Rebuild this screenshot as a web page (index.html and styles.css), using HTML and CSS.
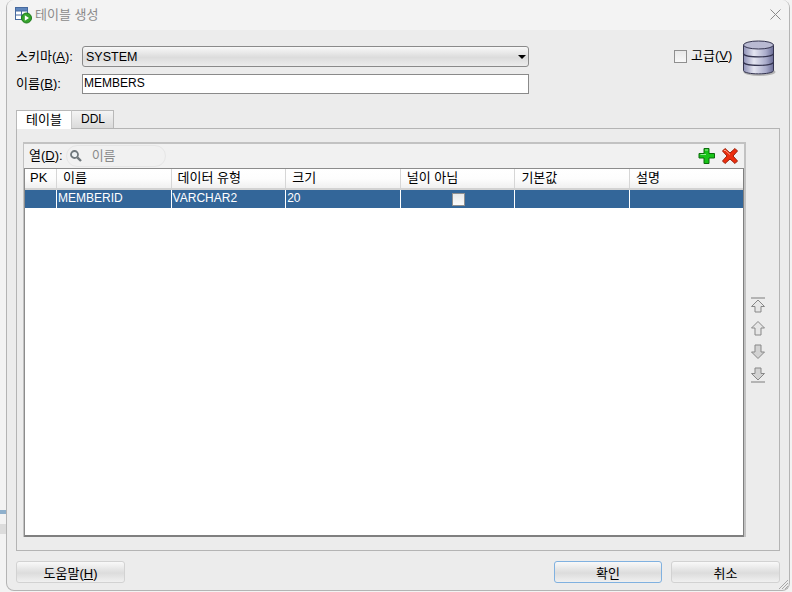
FILE: index.html
```html
<!DOCTYPE html>
<html lang="ko">
<head>
<meta charset="utf-8">
<title>테이블 생성</title>
<link rel="stylesheet" href="styles.css">
</head>
<body>
<div class="backdrop"><i class="mark-blue"></i><i class="mark-grey"></i></div>
<main class="window">
  <header class="titlebar">
    <svg class="title-icon" width="18" height="18" viewBox="0 0 18 18">
      <rect x="0.5" y="1.5" width="12" height="12" fill="#fff" stroke="#46699e"/>
      <rect x="0.5" y="1.5" width="12" height="3.5" fill="#5f86bd" stroke="#46699e"/>
      <path d="M0.5 9H12.5M6.5 5V13.5" stroke="#46699e" fill="none"/>
      <circle cx="11.5" cy="12" r="5" fill="#35a32c" stroke="#1d7a1b"/>
      <path d="M9.8 9.3L14 12L9.8 14.7Z" fill="#fff"/>
    </svg>
    <span class="title-text ko">테이블 생성</span>
    <svg class="close" width="11" height="11" viewBox="0 0 11 11"><path d="M0.5 0.5L10.5 10.5M10.5 0.5L0.5 10.5" stroke="#8a8a8a" fill="none"/></svg>
  </header>

  <section class="content">
    <div class="top">
      <div class="fields">
        <div class="field">
          <label class="field-label ko">스키마(<u>A</u>):</label>
          <div class="select"><span>SYSTEM</span><i class="caret"></i></div>
        </div>
        <div class="field field-name">
          <label class="field-label ko">이름(<u>B</u>):</label>
          <div class="input">MEMBERS</div>
        </div>
      </div>
      <div class="advanced">
        <i class="checkbox"></i>
        <span class="ko">고급(<u>V</u>)</span>
      </div>
      <svg class="db" width="36" height="38" viewBox="0 0 36 38">
        <defs>
          <linearGradient id="dbg" x1="0" x2="1" y1="0" y2="0">
            <stop offset="0" stop-color="#8d8fb5"/>
            <stop offset="0.35" stop-color="#e4e5f1"/>
            <stop offset="0.75" stop-color="#a9abca"/>
            <stop offset="1" stop-color="#6a6c96"/>
          </linearGradient>
        </defs>
        <ellipse cx="18.5" cy="33" rx="16" ry="4" fill="#b5b5b5"/>
        <path d="M2.500 6V31.500C2.500 36 32.500 36 32.500 31.500V6Z" fill="url(#dbg)" stroke="#34344f"/>
        <ellipse cx="17.500" cy="6" rx="15" ry="4" fill="#b9bad2" stroke="#34344f"/>
        <path d="M2.500 14.500C2.500 19 32.500 19 32.500 14.500M2.500 23C2.500 27.500 32.500 27.500 32.500 23" fill="none" stroke="#34344f" stroke-width="1.300"/>
      </svg>
    </div>

    <nav class="tabs">
      <span class="tab active ko">테이블</span>
      <span class="tab">DDL</span>
    </nav>

    <section class="panel">
      <div class="grid-area">
        <div class="grid-box">
          <div class="toolbar">
            <span class="col-label ko">열(<u>D</u>):</span>
            <div class="search">
              <svg width="14" height="14" viewBox="0 0 14 14"><circle cx="5.500" cy="5.500" r="3.500" fill="#eef2f4" stroke="#70787c" stroke-width="1.800"/><path d="M8.300 8.300L12 12" stroke="#70787c" stroke-width="2.400"/></svg>
              <span class="ko">이름</span>
            </div>
            <svg class="tool tool-add" width="18" height="18" viewBox="0 0 18 18"><path d="M6 1.500H11V6.500H16.500V11H11V16.500H6V11H1V6.500H6Z" fill="#18c318" stroke="#0c6b0c"/><path d="M7 3H10M2.500 7.500H8" stroke="#93ee93" fill="none"/></svg>
            <svg class="tool" width="18" height="18" viewBox="0 0 18 18"><path d="M1.500 4L4 1.500L9 6L14 1.500L16.500 4L12 9L16.500 14L14 16.500L9 12L4 16.500L1.500 14L6 9Z" fill="#ec2d0e" stroke="#9c2008"/><path d="M3 4L4 3L9 7.500" stroke="#ffa184" fill="none"/></svg>
          </div>
          <div class="table">
            <div class="row head ko">
              <div class="cell c-pk">PK</div>
              <div class="cell">이름</div>
              <div class="cell">데이터 유형</div>
              <div class="cell">크기</div>
              <div class="cell">널이 아님</div>
              <div class="cell">기본값</div>
              <div class="cell last">설명</div>
            </div>
            <div class="row selected">
              <div class="cell c-pk"></div>
              <div class="cell">MEMBERID</div>
              <div class="cell">VARCHAR2</div>
              <div class="cell">20</div>
              <div class="cell center"><i class="cell-check"></i></div>
              <div class="cell"></div>
              <div class="cell last"></div>
            </div>
          </div>
        </div>
        <div class="reorder">
          <svg width="16" height="17" viewBox="0 0 16 17"><path d="M1 1H15" stroke="#7c7c7c" fill="none"/><path d="M8 3L14.500 9.500H11V15H5V9.500H1.500Z" fill="#e6e6e6" stroke="#878787"/></svg>
          <svg width="16" height="17" viewBox="0 0 16 17"><path d="M8 1.500L14.500 8H11V15H5V8H1.500Z" fill="#e6e6e6" stroke="#878787"/></svg>
          <svg width="16" height="17" viewBox="0 0 16 17"><path d="M8 15.500L14.500 9H11V2H5V9H1.500Z" fill="#d2d2d2" stroke="#878787"/></svg>
          <svg width="16" height="17" viewBox="0 0 16 17"><path d="M8 14L14.500 7.500H11V2H5V7.500H1.500Z" fill="#d2d2d2" stroke="#878787"/><path d="M1 16H15" stroke="#7c7c7c" fill="none"/></svg>
        </div>
      </div>
    </section>

    <footer class="buttons">
      <button class="btn ko">도움말(<u>H</u>)</button>
      <span class="spacer"></span>
      <button class="btn default ko">확인</button>
      <button class="btn ko">취소</button>
    </footer>
  </section>
  <svg class="grip" width="12" height="12" viewBox="0 0 12 12"><path d="M11 2L2 11M11 5L5 11M11 8L8 11" stroke="#a8a8a8" fill="none"/></svg>
</main>
</body>
</html>
```
FILE: styles.css
```css
* { box-sizing: border-box; }
html, body { margin: 0; padding: 0; }
body {
  width: 792px;
  height: 592px;
  overflow: hidden;
  display: flex;
  background: #f3f3f3;
  font: 12px/16px "Liberation Sans", "Noto Sans CJK KR", sans-serif;
  color: #000;
}
.ko { font-size: 13px; }
.backdrop {
  width: 6px;
  flex: none;
  display: flex;
  flex-direction: column;
  padding-top: 510px;
}
.mark-blue { display: block; height: 4px; background: #8fb0cc; }
.mark-grey { display: block; height: 10px; margin-top: 10px; background: #dcdcdc; }
.window {
  position: relative;
  width: 784px;
  height: 591px;
  margin-right: 2px;
  background: #ececec;
  border: 1px solid #b4b4b4;
  border-top: 0;
  border-radius: 8px;
  display: flex;
  flex-direction: column;
  overflow: hidden;
}
.titlebar {
  height: 30px;
  flex: none;
  display: flex;
  align-items: center;
  padding: 0 8px 0 8px;
  background: #f3f3f3;
  color: #8b8b8b;
}
.title-icon { flex: none; }
.title-text { margin-left: 2px; }
.close { margin-left: auto; margin-top: -1px; }
.content {
  flex: 1;
  display: flex;
  flex-direction: column;
  padding: 0 9px 8px 9px;
  min-height: 0;
}
.top {
  height: 50px;
  margin-top: 11px;
  display: flex;
  align-items: flex-start;
  flex: none;
}
.fields { width: 513px; padding-top: 5px; }
.field { display: flex; align-items: center; height: 21px; }
.field-name { margin-top: 7px; height: 20px; }
.field-label { width: 66px; flex: none; white-space: nowrap; }
.select {
  flex: 1;
  height: 21px;
  border: 1px solid #8a8a8a;
  border-radius: 3px;
  background: linear-gradient(#f8f8f8, #dcdcdc 55%, #ececec);
  display: flex;
  align-items: center;
  padding: 0 2px 0 3px;
  font-size: 12.500px;
}
.caret {
  margin-left: auto;
  border-left: 4px solid transparent;
  border-right: 4px solid transparent;
  border-top: 4px solid #000;
}
.input {
  flex: 1;
  height: 20px;
  border: 1px solid #8a8a8a;
  background: #fff;
  padding-left: 1px;
  line-height: 17px;
}
.advanced {
  margin-left: 145px;
  display: flex;
  align-items: center;
  height: 18px;
  margin-top: 6px;
  gap: 4px;
}
.checkbox {
  display: block;
  width: 13px;
  height: 13px;
  border: 1px solid #8f8f8f;
  background: linear-gradient(#e8e8e8, #f8f8f8);
}
.db { margin-left: 9px; margin-top: -2px; flex: none; }
.tabs {
  display: flex;
  height: 19px;
  margin-top: 19px;
  flex: none;
}
.tab {
  width: 55px;
  height: 19px;
  text-align: center;
  line-height: 17px;
  background: #fff;
  border: 1px solid #b8b8b8;
  border-bottom: 0;
}
.tab.active { position: relative; z-index: 1; margin-bottom: -1px; height: 19px; border-right: 0; }
.tab:not(.active) {
  width: 43px;
  padding-left: 1px;
  background: linear-gradient(#f4f4f4, #d9d9d9);
  border-left: 1px solid #c8c8c8;
}
.panel {
  flex: none;
  height: 423px;
  border: 1px solid #b4b4b4;
  margin-top: -1px;
  padding: 13px 0 0 7px;
  background: #ececec;
}
.grid-area { display: flex; align-items: stretch; height: 395px; }
.grid-box {
  width: 722px;
  height: 395px;
  display: flex;
  flex-direction: column;
  border: 1px solid #c2c2c2;
  border-width: 2px 2px 0 0;
  box-shadow: -1px 0 0 #c2c2c2;
  background: #f1f1f1;
  flex: none;
}
.toolbar {
  height: 24px;
  flex: none;
  display: flex;
  align-items: center;
  padding: 0 5px 0 5px;
}
.col-label { white-space: nowrap; }
.search {
  width: 100px;
  height: 22px;
  margin-left: 3px;
  border-radius: 11px;
  border: 1px solid #e6e6e6;
  background: #f1f1f1;
  display: flex;
  align-items: center;
  gap: 9px;
  padding-left: 2px;
  color: #8a8a8a;
}
.tool { flex: none; margin-left: 5px; }
.tool-add { margin-left: auto; }
.table {
  flex: 1;
  min-height: 0;
  background: #fff;
  border: 1px solid #7f7f7f;
  border-width: 1px 1px 2px 1px;
  border-color: #8c8c8c #7f7f7f #7f7f7f #8c8c8c;
}
.row { display: flex; }
.head {
  height: 21px;
  background: linear-gradient(#fff, #fdfdfd 50%, #f0f0f0);
  border-bottom: 2px solid #d2d2d2;
}
.selected { height: 18px; background: #336699; color: #fff; line-height: 18px; }
.cell {
  width: 114.600px;
  flex: none;
  padding-left: 6px;
  border-right: 1px solid #d6d6d6;
  white-space: nowrap;
  line-height: 18px;
}
.selected .cell { border-right-color: #fff; padding-left: 1px; line-height: 17px; }
.c-pk { width: 32px; padding-left: 5px; }
.last { border-right: 0; }
.center { display: flex; align-items: center; justify-content: center; padding: 0; }
.cell-check {
  display: block;
  width: 13px;
  height: 13px;
  border: 1px solid #8f8f8f;
  background: linear-gradient(#e9e9e9, #fafafa);
}
.reorder {
  flex: none;
  width: 16px;
  margin-left: 4px;
  padding-top: 155px;
  display: flex;
  flex-direction: column;
  gap: 6px;
}
.buttons {
  display: flex;
  margin-top: 10px;
  flex: none;
  gap: 9px;
}
.spacer { flex: 1; }
.btn {
  width: 109px;
  height: 22px;
  padding: 0;
  font-family: inherit;
  color: #000;
  border: 1px solid #d2d2d2;
  border-radius: 3px;
  background: linear-gradient(#f9f9f9, #dcdcdc 55%, #f0f0f0);
}
.btn.default { width: 108px; border-color: #80b1e0; }
.grip { position: absolute; right: 0; bottom: 0; }
```
